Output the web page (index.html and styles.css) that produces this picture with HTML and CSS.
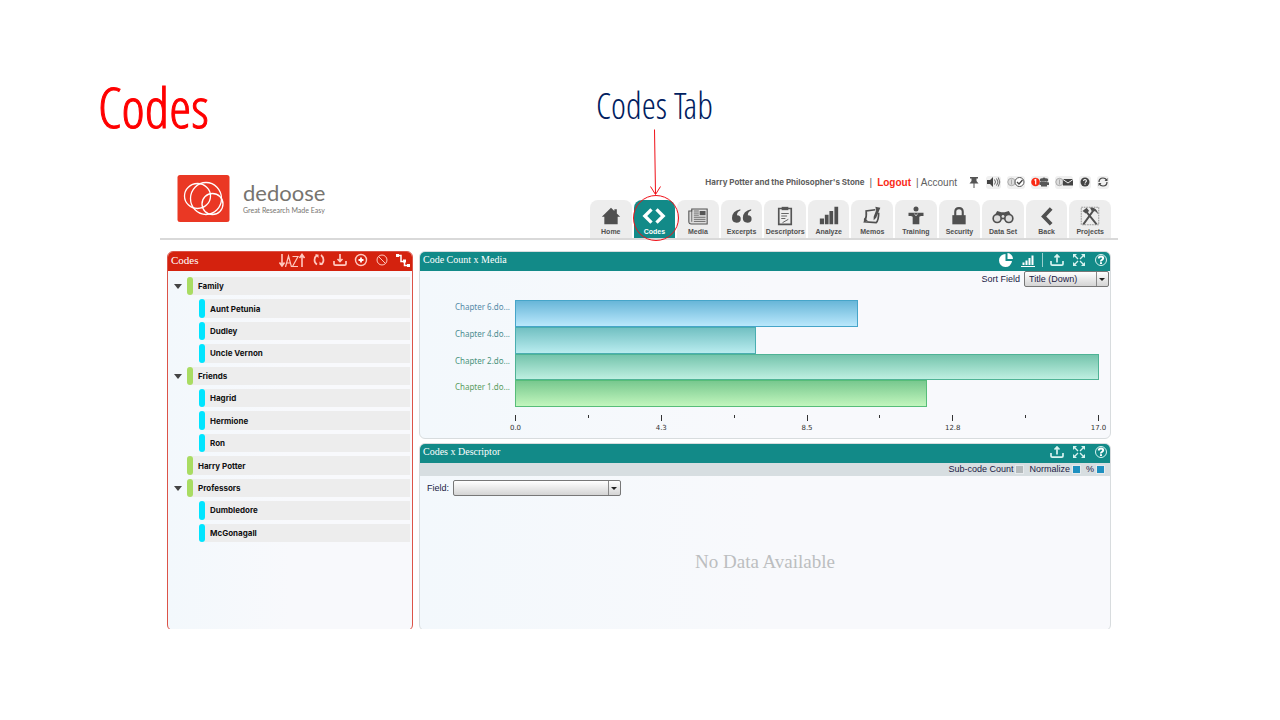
FILE: index.html
```html
<!DOCTYPE html>
<html lang="en">
<head>
<meta charset="utf-8">
<title>Codes</title>
<link rel="stylesheet" href="styles.css">
</head>
<body>
<svg class="defs" aria-hidden="true">
  <symbol id="upload" viewBox="0 0 14 14"><path d="M1 8v3q0 1.200 1.200 1.200h9.600q1.200 0 1.200-1.200V8M7 9.500V2.500M4.500 4.500 7 2l2.500 2.500" fill="none" stroke="currentColor" stroke-width="1.700"/></symbol>
  <symbol id="expand" viewBox="0 0 14 14"><path d="M2 2l4 4M12 2 8 6M2 12l4-4M12 12 8 8" stroke="currentColor" stroke-width="1.300"/><path d="M1 1h4L1 5zM13 1v4L9 1zM1 13V9l4 4zM13 13H9l4-4z" fill="currentColor"/></symbol>
  <symbol id="help" viewBox="0 0 14 14"><circle cx="7" cy="7" r="5.500" fill="none" stroke="currentColor"/><path d="M4.800 5.500q0-2 2.200-2t2.200 1.800q0 .9-1.200 1.500T7 8.500M7 9.300v1.700" fill="none" stroke="#fff" stroke-width="2"/></symbol>
</svg>
<header class="slide-head">
  <h1 class="slide-title">Codes</h1>
  <p class="callout">Codes Tab</p>
</header>
<div class="app">
  <header class="topbar">
    <a class="brand" href="#">
      <svg class="logo" viewBox="0 0 52 47" aria-hidden="true"><rect width="52" height="47" rx="2.500" fill="#ea3824"/><g fill="none" stroke="#fff" stroke-width="1.300"><ellipse cx="20" cy="21" rx="13" ry="12.500"/><ellipse cx="28.500" cy="23.500" rx="15.500" ry="16"/><circle cx="35" cy="29" r="10.500"/></g></svg>
      <span class="brand-text"><span class="brand-name">dedoose</span><span class="tagline">Great Research Made Easy</span></span>
    </a>
    <div class="top-right">
      <div class="account">
        <strong class="project">Harry Potter and the Philosopher's Stone</strong>
        <span class="bar">|</span><a class="logout" href="#">Logout</a>
        <a class="acct" href="#">| Account</a>
        <div class="status">
          <button class="chip plain" aria-label="Pin"><svg width="12" height="12" viewBox="0 0 12 12"><path d="M2 1h8v1.500H8.500V5l2 2.500h-9l2-2.500V2.500H2zM5.500 7h1v5h-1z" fill="#555"/></svg></button>
          <button class="chip" aria-label="Sound"><svg width="15" height="12" viewBox="0 0 15 12"><path d="M1 4h3l3-3v10L4 8H1z" fill="#444"/><path d="M8.500 3.500q2 2.500 0 5M10.500 2.500q3 3.500 0 7M12.300 1.500q3 4.500 0 9" fill="none" stroke="#666"/></svg></button>
          <button class="chip" aria-label="Tasks"><svg width="18" height="12" viewBox="0 0 18 12"><circle cx="4.500" cy="6" r="3.700" fill="#ddd" stroke="#aaa"/><path d="M4.500 3.500v5" stroke="#aaa"/><circle cx="12.500" cy="6" r="4.500" fill="#fff" stroke="#555"/><path d="M10 6l2 2 3.500-4" fill="none" stroke="#444" stroke-width="1.300"/></svg></button>
          <button class="chip" aria-label="Users"><svg width="18" height="12" viewBox="0 0 18 12"><circle cx="4.500" cy="6" r="4.300" fill="#fa2a14"/><path d="M3.300 4.300 4.700 3.500V8.500" fill="none" stroke="#fff" stroke-width="1.200"/><g fill="#555"><circle cx="10.500" cy="4" r="1.700"/><circle cx="15.500" cy="4" r="1.700"/><circle cx="13" cy="3.500" r="2"/><path d="M8.500 6.500q2-1.500 4.500-1t5 1V9H16v1.500h-6V9H8.500z"/></g></svg></button>
          <button class="chip" aria-label="Messages"><svg width="18" height="12" viewBox="0 0 18 12"><circle cx="4.500" cy="6" r="3.700" fill="#ddd" stroke="#aaa"/><path d="M4.500 3.500v5" stroke="#aaa"/><path d="M8 3h10v6.500H8z" fill="#444"/><path d="M8 3.500 13 7l5-3.500" fill="none" stroke="#eee"/></svg></button>
          <button class="chip" aria-label="Help"><svg width="12" height="12" viewBox="0 0 12 12"><circle cx="6" cy="6" r="4.500" fill="#444"/><path d="M4.600 5q0-1.500 1.400-1.500T7.400 5Q7.400 5.600 6 6.600M6 7.500v1.300" fill="none" stroke="#fff" stroke-width="1.100"/></svg></button>
          <button class="chip" aria-label="Refresh"><svg width="12" height="12" viewBox="0 0 12 12"><path d="M2 6q0-4 4-4 2.500 0 3.500 2M10 6q0 4-4 4-2.500 0-3.500-2" fill="none" stroke="#444" stroke-width="1.200"/><path d="M10.500 2v3h-3zM1.500 10V7h3z" fill="#444"/></svg></button>
        </div>
      </div>
      <nav class="tabs">
        <a class="tab" href="#"><svg viewBox="0 0 24 24"><path d="M12 2 1 13h3v9h16v-9h3l-4-4V4h-3v2z" fill="#505050"/></svg>Home</a>
        <a class="tab active" href="#"><svg class="wide" viewBox="0 0 28 24"><path d="M11 4 3 12l8 8M17 4l8 8-8 8" fill="none" stroke="#fff" stroke-width="4"/></svg>Codes
          <svg class="marker" viewBox="0 0 48 114" aria-hidden="true"><g fill="none" stroke="#f01018"><circle cx="24" cy="90" r="22.500"/><path d="M22.500 1.500 23.500 66M18.500 58.500l5 8 5-8"/></g></svg></a>
        <a class="tab" href="#"><svg viewBox="0 0 24 24"><path d="M4.500 3.500H23v18H4q-3 0-3-3V6h3.500z" fill="#ddd" stroke="#555" stroke-width="1.300"/><path d="M4.500 5v14M7 6h6M7 8.500h6M7 11h6M7 13.500h14M7 16h14M7 18.500h14" stroke="#555"/><path d="M14 6h7v5h-7z" fill="#555"/></svg>Media</a>
        <a class="tab" href="#"><svg class="wide" viewBox="0 0 28 24"><path d="M12 4Q2 6 2 14.500 2 20 7.500 20q5 0 5-4.500T8 11Q8 7 12 5.500zM25 4q-10 2-10 10.500Q15 20 20.500 20q5 0 5-4.500T21 11q0-4 4-5.500z" fill="#505050"/></svg>Excerpts</a>
        <a class="tab" href="#"><svg viewBox="0 0 24 24"><path d="M4.500 3h15v19h-15z" fill="#eee" stroke="#555" stroke-width="2"/><path d="M8 1h8v4H8z" fill="#555"/><path d="M7.500 9h9M7.500 12h7M7.500 15h5M9 20l7-4" stroke="#666" stroke-width="1.200"/></svg>Descriptors</a>
        <a class="tab" href="#"><svg viewBox="0 0 24 24"><path d="M1 15h5v7H1zM7 10.500h4.500V22H7zM12.500 6H17v16h-4.500zM18.500 1H23v21h-4.500z" fill="#505050"/></svg>Analyze</a>
        <a class="tab" href="#"><svg viewBox="0 0 24 24"><path d="M16 4.500 5 6Q6 13 3 19l14 1q3-3 3-12" fill="none" stroke="#505050" stroke-width="2"/><path d="M22 2l-5 12-3 3v-4l3-8-1-4zM2 17l1-3 5 5z" fill="#505050"/></svg>Memos</a>
        <a class="tab" href="#"><svg viewBox="0 0 24 24"><circle cx="12" cy="3.500" r="3" fill="#505050"/><path d="M3 8h18v4h-3l-2 1v9H8v-9l-2-1H3z" fill="#505050"/><path d="M10 9l2 3 2-3" fill="none" stroke="#ccc"/></svg>Training</a>
        <a class="tab" href="#"><svg viewBox="0 0 24 24"><path d="M4 11h16v11H4z" fill="#505050"/><path d="M7.500 12V7q0-4.500 4.500-4.500T16.500 7v5" fill="none" stroke="#505050" stroke-width="2.500"/></svg>Security</a>
        <a class="tab" href="#"><svg class="wide" viewBox="0 0 28 24"><path d="M3 13 7 6l5 1.500h4L21 6l4 7-5 4-6-1-6 1z" fill="#505050"/><circle cx="7" cy="15" r="4.800" fill="#ddd" stroke="#505050" stroke-width="2"/><circle cx="21" cy="15" r="4.800" fill="#ddd" stroke="#505050" stroke-width="2"/><circle cx="14" cy="12.500" r="1.700" fill="#ddd"/></svg>Data Set</a>
        <a class="tab" href="#"><svg viewBox="0 0 24 24"><path d="M17 3 8 12.500 17 22" fill="none" stroke="#505050" stroke-width="4.500"/></svg>Back</a>
        <a class="tab" href="#"><svg viewBox="0 0 24 24"><path d="M1.500 1.500h21v21h-21z" fill="none" stroke="#888" stroke-dasharray="2 1"/><path d="M6 5l14 17M17 4 4 22" stroke="#505050" stroke-width="2.300"/><path d="M3 6l5-4 3 4-4 3zM12 2q8-1 10 8-4-5-8-4z" fill="#505050"/></svg>Projects</a>
      </nav>
    </div>
  </header>

  <main class="panels">
    <section class="panel codes">
      <div class="panel-head">
        <h2>Codes</h2>
        <div class="tools">
          <button aria-label="Sort A to Z" class="sort"><svg width="26" height="14" viewBox="0 0 26 14"><path d="M3 1v12M.5 9.500 3 13l2.500-3.500M23 14V2M20.500 5 23 1.500 25.500 5" fill="none" stroke="currentColor" stroke-width="1.600"/><path d="M6.500 14 9.500 3l3 11M7.500 10h4M13.500 3.500H19L13.500 13.500H19" fill="none" stroke="currentColor" stroke-width="1.200"/></svg></button>
          <button aria-label="Refresh"><svg viewBox="0 0 14 14"><path d="M5 2Q2.500 4 2.500 7T5 11.500M9 2q2.500 2 2.500 5T9 11.500" fill="none" stroke="currentColor" stroke-width="1.700"/><path d="M3 1.500h3.500V5zM11 12H7.500V8.500z" fill="currentColor"/></svg></button>
          <button aria-label="Download"><svg viewBox="0 0 14 14"><path d="M1 8v3q0 1.200 1.200 1.200h9.600q1.200 0 1.200-1.200V8M7 1v7M4.500 6 7 8.500 9.500 6" fill="none" stroke="currentColor" stroke-width="1.700"/></svg></button>
          <button aria-label="Add code"><svg viewBox="0 0 14 14"><circle cx="7" cy="7" r="5.500" fill="none" stroke="currentColor" stroke-width="1.400"/><path d="M7 4.500v5M4.500 7h5" stroke="#fff" stroke-width="1.800"/></svg></button>
          <button aria-label="Clear"><svg viewBox="0 0 14 14"><circle cx="7" cy="7" r="5" fill="none" stroke="currentColor"/><path d="M3.500 3.500l7 7" stroke="currentColor"/></svg></button>
          <button aria-label="Tree view"><svg viewBox="0 0 14 14"><path d="M1.500 2.500H5v6h3.500v4h4" fill="none" stroke="#fff" stroke-width="1.500"/><path d="M0 1h3v3H0zM7 6.500h3v3H7zM11 11h3v3h-3z" fill="#fff"/></svg></button>
        </div>
      </div>
      <ul class="tree">
        <li class="root"><button class="caret" aria-label="Collapse Family"></button><span class="code">Family</span></li>
        <li class="child"><span class="code">Aunt Petunia</span></li>
        <li class="child"><span class="code">Dudley</span></li>
        <li class="child"><span class="code">Uncle Vernon</span></li>
        <li class="root"><button class="caret" aria-label="Collapse Friends"></button><span class="code">Friends</span></li>
        <li class="child"><span class="code">Hagrid</span></li>
        <li class="child"><span class="code">Hermione</span></li>
        <li class="child"><span class="code">Ron</span></li>
        <li class="root"><span class="code">Harry Potter</span></li>
        <li class="root"><button class="caret" aria-label="Collapse Professors"></button><span class="code">Professors</span></li>
        <li class="child"><span class="code">Dumbledore</span></li>
        <li class="child"><span class="code">McGonagall</span></li>
      </ul>
    </section>

    <div class="column">
      <section class="panel">
        <div class="panel-head">
          <h2>Code Count x Media</h2>
          <div class="tools">
            <button aria-label="Pie chart"><svg viewBox="0 0 14 14"><path d="M6.500 1v7H13A6.500 6.500 0 1 1 6.500 1z" fill="#fff"/><path d="M8.500 0A6 6 0 0 1 14 6H8.500z" fill="#fff"/></svg></button>
            <button aria-label="Bar chart"><svg viewBox="0 0 14 14"><path d="M0 13h14v1H0zM1.500 9.500h2V12h-2zM4.500 7.500h2V12h-2zM7.500 5h2v7h-2zM10.500 2.500h2V12h-2z" fill="#fff"/></svg></button>
            <span class="divider"></span>
            <button aria-label="Export"><svg><use href="#upload"/></svg></button>
            <button aria-label="Expand"><svg><use href="#expand"/></svg></button>
            <button aria-label="Help"><svg><use href="#help"/></svg></button>
          </div>
        </div>
        <div class="sort-row">
          <label for="sort">Sort Field</label>
          <span class="combo"><select id="sort"><option>Title (Down)</option></select></span>
        </div>
        <div class="chart">
          <div class="series c6"><span class="name">Chapter 6.do...</span><span class="track"><span class="fill" style="width:58.8%"></span></span></div>
          <div class="series c4"><span class="name">Chapter 4.do...</span><span class="track"><span class="fill" style="width:41.2%"></span></span></div>
          <div class="series c2"><span class="name">Chapter 2.do...</span><span class="track"><span class="fill" style="width:100%"></span></span></div>
          <div class="series c1"><span class="name">Chapter 1.do...</span><span class="track"><span class="fill" style="width:70.6%"></span></span></div>
        </div>
        <ol class="axis">
          <li>0.0</li><li class="minor"></li><li>4.3</li><li class="minor"></li><li>8.5</li><li class="minor"></li><li>12.8</li><li class="minor"></li><li>17.0</li>
        </ol>
      </section>

      <section class="panel descriptor">
        <div class="panel-head">
          <h2>Codes x Descriptor</h2>
          <div class="tools">
            <button aria-label="Export"><svg><use href="#upload"/></svg></button>
            <button aria-label="Expand"><svg><use href="#expand"/></svg></button>
            <button aria-label="Help"><svg><use href="#help"/></svg></button>
          </div>
        </div>
        <div class="options">
          <label>Sub-code Count <input type="checkbox"></label>
          <label>Normalize <input type="checkbox" checked></label>
          <label>% <input type="checkbox" checked></label>
        </div>
        <div class="field-row">
          <label for="field">Field:</label>
          <span class="combo long"><select id="field"><option></option></select></span>
        </div>
        <p class="empty">No Data Available</p>
      </section>
    </div>
  </main>
</div>
</body>
</html>
```
FILE: styles.css
```css
* { box-sizing: border-box; }
body { margin: 0; background: #fff; color: #222; font-family: "Liberation Sans", Arial, sans-serif; font-size: 9px; }
h1, h2, p, ul, ol { margin: 0; padding: 0; font-weight: normal; }
ul, ol { list-style: none; }
a { color: inherit; text-decoration: none; }
button { padding: 0; border: 0; background: none; color: inherit; font: inherit; display: flex; align-items: center; justify-content: center; }
svg { display: block; flex: none; }
.defs { position: absolute; width: 0; height: 0; }

.slide-head { display: grid; grid-template-columns: 39% 1fr; align-items: end; height: 136px; padding-left: 98px; font-family: "Open Sans Condensed Light", "Open Sans Condensed", "Liberation Sans Narrow", sans-serif; }
.slide-title, .callout { font-weight: 300; line-height: 60px; }
.slide-title { color: #f00; font-size: 56px; -webkit-text-stroke: 1px; }
.callout { padding-left: 37px; color: #002060; font-size: 36px; }

.app { margin: 0 162px 0 160px; }
.topbar { display: flex; justify-content: space-between; height: 104px; padding: 39px 7px 0 17px; border-bottom: 2px solid #d9d9d9; }
.brand { display: flex; gap: 13px; }
.logo { width: 53px; height: 47px; }
.brand-text { display: flex; flex-direction: column; color: #77746f; font-family: Lato, sans-serif; }
.brand-name { font-size: 22px; line-height: 26px; margin-top: 5px; }
.tagline { font-size: 7px; line-height: 8px; white-space: nowrap; }
.top-right { display: flex; flex-direction: column; justify-content: space-between; width: 521px; }
.account { display: flex; align-items: center; justify-content: flex-end; gap: 5px; height: 14px; color: #606060; font-size: 10px; white-space: nowrap; }
.project { font: bold 8px/14px Inter, sans-serif; }
.logout { color: #f92a16; font-weight: bold; }
.status { display: flex; gap: 6px; padding: 0 2px 0 6px; }
.chip { height: 13px; border-radius: 3px; background: #f0f0f0; }
.plain { background: none; }

.tabs { display: grid; grid-template-columns: repeat(12, minmax(0, 1fr)); gap: 2px; }
.tab { position: relative; display: flex; flex-direction: column; align-items: center; gap: 1px; height: 38px; padding-top: 6px; border-radius: 8px 8px 0 0; background: #ededed; color: #505050; font-size: 7px; line-height: 10px; font-weight: bold; }
.tab svg { width: 20px; height: 20px; }
.tab .wide { width: 26px; }
.tab.active { background: #128a88; color: #fff; }
.tab .marker { position: absolute; z-index: 1; left: -2px; top: -72px; width: 48px; height: 114px; }

.panels { display: grid; grid-template-columns: 246px minmax(0, 1fr); grid-template-rows: 380px; gap: 6px; padding: 11px 7px 0; height: 389px; overflow: hidden; }
.panel { border: 1px solid #d8dcde; border-radius: 6px; background: linear-gradient(90deg, #f3f8fc, #f8f9fc 50%); overflow: hidden; }
.codes { border-color: #dc5348; }
.panel-head { display: flex; align-items: center; justify-content: space-between; height: 20px; margin: -1px -1px 0; padding: 0 3px 2px 4px; background: #128a88; color: #fff; }
.codes .panel-head { background: #d4220e; }
.panel-head h2 { font: 10px/18px "Liberation Serif", serif; }
.codes .panel-head h2 { font-size: 11px; }
.tools { display: flex; align-items: center; gap: 8px; color: #d9f3f0; }
.codes .tools { gap: 7px; color: #ffc9c0; }
.tools svg { width: 14px; height: 14px; }
.tools .sort svg { width: 26px; }
.divider { width: 1px; height: 14px; margin: 0 -1px; background: #9bcfcd; }

.tree { display: grid; grid-auto-rows: 1fr; gap: 4px; height: 265px; margin-top: 6px; }
.root, .child { display: flex; position: relative; padding: 0 2px 0 19px; }
.child { padding-left: 31px; }
.code { flex: 1; display: flex; align-items: center; gap: 5px; border-radius: 3px 0 0 3px; background: #ededed; color: #111; font: bold 8px/16px Inter, sans-serif; }
.code::before { content: ""; align-self: stretch; width: 6px; border-radius: 3px; background: #a9dc62; }
.child .code::before { background: #00e5ff; }
.caret { position: absolute; left: 6px; top: 7px; border: 4px solid transparent; border-top: 5px solid #444; border-bottom: 0; }

.column { display: grid; grid-template-rows: 188px 1fr; gap: 4px; }
.sort-row, .field-row { display: flex; align-items: center; gap: 4px; color: #211a45; font-size: 9px; }
.sort-row { justify-content: flex-end; padding: 0 1px; }
.combo { position: relative; display: block; width: 85px; height: 16px; }
.long { width: 168px; }
.combo select { appearance: none; width: 100%; height: 100%; margin: 0; padding: 0 14px 0 4px; border: 1px solid #777; border-radius: 2px; background: linear-gradient(#fff, #d4d4d4); color: #211a45; font: 9px "Liberation Sans", sans-serif; }
.combo::before { content: ""; position: absolute; right: 12px; top: 1px; bottom: 1px; border-left: 1px solid #888; }
.combo::after { content: ""; position: absolute; right: 4px; top: 7px; border: 3px solid transparent; border-top-color: #222; border-bottom: 0; }

.chart { display: grid; grid-auto-rows: 1fr; height: 107px; margin-top: 13px; padding-right: 11px; }
.series { display: grid; grid-template-columns: 90px minmax(0, 1fr); column-gap: 5px; }
.name { text-align: right; font: 8px/14px "Noto Sans", sans-serif; }
.track { display: flex; }
.fill { border: 1px solid; }
.c6 { color: #558ba8; } .c4 { color: #4c8d90; } .c2 { color: #4a947c; } .c1 { color: #5a9d5f; }
.c6 .fill { border-color: #46a5c9; background: linear-gradient(#68b6d8, #bae8fc); }
.c4 .fill { border-color: #4aaeb1; background: linear-gradient(#72c0c2, #b9ecef); }
.c2 .fill { border-color: #4fb395; background: linear-gradient(#75c4ac, #beefe1); }
.c1 .fill { border-color: #57bd79; background: linear-gradient(#78c88f, #c2f6bd); }
.axis { display: flex; justify-content: space-between; margin: 8px 11px 0 95px; color: #333; font: 7px/10px "DejaVu Sans", sans-serif; }
.axis li { display: flex; flex-direction: column; align-items: center; width: 1px; gap: 2px; white-space: nowrap; }
.axis li::before { content: ""; flex: none; width: 1px; height: 6px; background: #333; }
.axis .minor::before { height: 3px; }

.options { display: flex; justify-content: flex-end; gap: 6px; height: 13px; padding: 0 6px 1px 0; background: #d7dee1; color: #211a45; }
.options label { display: flex; align-items: center; gap: 3px; }
.options input { appearance: none; width: 7px; height: 7px; margin: 0; background: #b5bbbd; outline: 1px solid #e6eaec; }
.options input:checked { background: #1e90c0; }
.field-row { padding: 4px 7px; }
.empty { padding-top: 50px; text-align: center; color: #bcbec0; font: 19px/24px "Liberation Serif", serif; }
```
